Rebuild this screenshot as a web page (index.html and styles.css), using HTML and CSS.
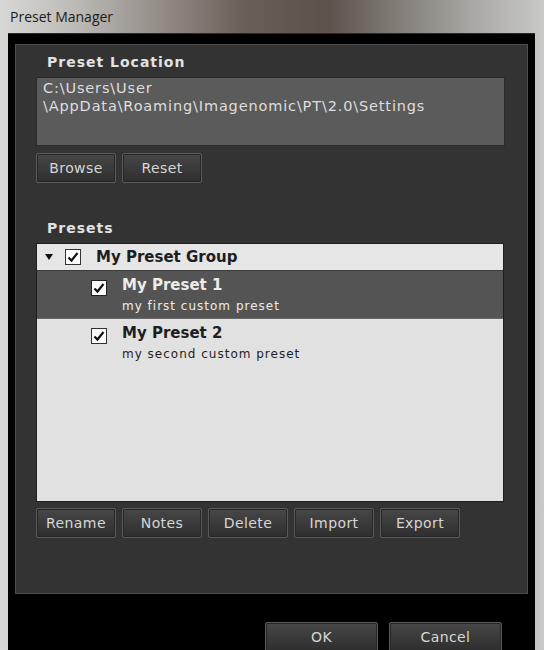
FILE: index.html
```html
<!DOCTYPE html>
<html lang="en">
<head>
  <meta charset="UTF-8">
  <meta name="viewport" content="width=device-width, initial-scale=1.0">
  <title>Preset Manager</title>
  <link rel="stylesheet" href="styles.css">
</head>
<body>
  <div class="window">
    <div class="titlebar">Preset Manager</div>

    <div class="client">
      <div class="panel">
        <!-- Preset Location -->
        <h3 class="section-title">Preset Location</h3>
        <div class="path-box">C:\Users\User<br>\AppData\Roaming\Imagenomic\PT\2.0\Settings</div>
        <div class="button-row">
          <button class="btn">Browse</button>
          <button class="btn">Reset</button>
        </div>

        <!-- Presets -->
        <h3 class="section-title presets-title">Presets</h3>
        <div class="preset-list">
          <div class="row group-row">
            <span class="arrow"></span>
            <svg class="check" width="16" height="16" viewBox="0 0 16 16">
              <rect x="0.5" y="0.5" width="15" height="15" fill="#fff" stroke="#333"/>
              <path d="M3.5 8.5 L6.5 11.5 L12.5 4" fill="none" stroke="#111" stroke-width="2.2"/>
            </svg>
            <span class="row-name">My Preset Group</span>
          </div>
          <div class="row preset-row selected">
            <svg class="check" width="16" height="16" viewBox="0 0 16 16">
              <rect x="0.5" y="0.5" width="15" height="15" fill="#fff" stroke="#222"/>
              <path d="M3.5 8.5 L6.5 11.5 L12.5 4" fill="none" stroke="#111" stroke-width="2.2"/>
            </svg>
            <div class="row-text">
              <span class="row-name">My Preset 1</span>
              <span class="row-note">my first custom preset</span>
            </div>
          </div>
          <div class="row preset-row">
            <svg class="check" width="16" height="16" viewBox="0 0 16 16">
              <rect x="0.5" y="0.5" width="15" height="15" fill="#fff" stroke="#333"/>
              <path d="M3.5 8.5 L6.5 11.5 L12.5 4" fill="none" stroke="#111" stroke-width="2.2"/>
            </svg>
            <div class="row-text">
              <span class="row-name">My Preset 2</span>
              <span class="row-note">my second custom preset</span>
            </div>
          </div>
        </div>
        <div class="button-row bottom-row">
          <button class="btn">Rename</button>
          <button class="btn">Notes</button>
          <button class="btn">Delete</button>
          <button class="btn">Import</button>
          <button class="btn">Export</button>
        </div>
      </div>

      <div class="dialog-buttons">
        <button class="btn wide">OK</button>
        <button class="btn wide">Cancel</button>
      </div>
    </div>
  </div>
</body>
</html>
```

FILE: styles.css
```css
/* General Styles */
body {
  margin: 0;
  background: #000;
  font-family: "DejaVu Sans", Verdana, sans-serif;
}

.window {
  width: 544px;
  height: 650px;
  overflow: hidden;
  background: linear-gradient(to right, #d8d8d6 0%, #bcbab6 14%, #6a5f57 45%, #5b524b 60%, #a5a29e 85%, #c8cac8 100%);
  display: flex;
  flex-direction: column;
}

.titlebar {
  height: 33px;
  padding: 7px 0 0 10px;
  box-sizing: border-box;
  font-family: "Open Sans", sans-serif;
  font-size: 14px;
  color: #1c1c1c;
  flex-shrink: 0;
}

.client {
  flex: 1;
  margin: 0 9px 0 8px;
  background: #000;
  padding: 10px 7px 0 7px;
  border-top: 1px solid #2a2a2a;
}

.panel {
  height: 550px;
  box-sizing: border-box;
  background: #333333;
  border: 1px solid #4d4d4d;
  padding: 7px 20px 0 20px;
}

.section-title {
  margin: 0 0 5px 11px;
  height: 20px;
  line-height: 20px;
  font-size: 14px;
  font-weight: bold;
  letter-spacing: 1px;
  color: #e2e2e2;
}

.presets-title {
  margin: 35px 0 5px 11px;
}

.path-box {
  width: 469px;
  height: 69px;
  box-sizing: border-box;
  background: #5b5b5b;
  border: 1px solid #2a2a2a;
  padding: 1px 6px;
  font-size: 14.5px;
  line-height: 18px;
  letter-spacing: 0.85px;
  color: #dedede;
}

.button-row {
  display: flex;
  gap: 6px;
  margin-top: 7px;
}

.bottom-row {
  margin-top: 6px;
}

.btn {
  width: 80px;
  height: 30px;
  background: linear-gradient(to bottom, #474747, #2e2e2e);
  border: 1px solid #5a5a5a;
  border-radius: 2px;
  box-shadow: inset 0 0 0 1px #262626;
  color: #d6d6d6;
  font-family: "DejaVu Sans", Verdana, sans-serif;
  font-size: 14px;
  letter-spacing: 0.4px;
  padding: 0;
}

.preset-list {
  width: 468px;
  height: 259px;
  box-sizing: border-box;
  background: #e1e1e1;
  border: 1px solid #1e1e1e;
}

.row {
  display: flex;
  color: #1e1e1e;
}

.group-row {
  height: 26px;
  align-items: center;
  padding-left: 8px;
  background: #e6e6e6;
}

.arrow {
  width: 0;
  height: 0;
  border-left: 4px solid transparent;
  border-right: 4px solid transparent;
  border-top: 6px solid #111;
  margin-right: 12px;
}

.group-row .check {
  margin-right: 15px;
}

.row-name {
  font-size: 15px;
  font-weight: bold;
  letter-spacing: 0;
}

.preset-row {
  height: 49px;
  padding: 5px 0 0 54px;
  box-sizing: border-box;
}

.preset-row .check {
  margin: 4px 15px 0 0;
  flex-shrink: 0;
}

.row-text {
  display: flex;
  flex-direction: column;
}

.row-note {
  font-size: 12px;
  letter-spacing: 1px;
  margin-top: 5px;
}

.selected {
  background: #545454;
  border-top: 1px solid #3a3a3a;
  border-bottom: 1px solid #6a6a6a;
  color: #ececec;
}

.dialog-buttons {
  display: flex;
  gap: 11px;
  margin: 28px 0 0 250px;
}

.wide {
  width: 113px;
}
```
